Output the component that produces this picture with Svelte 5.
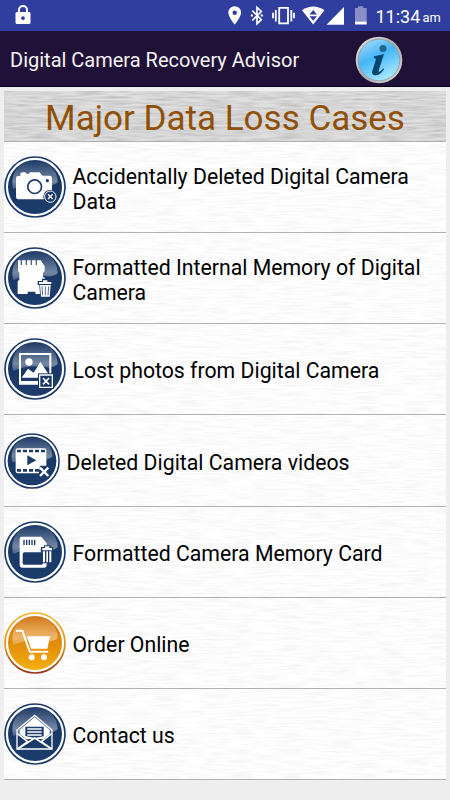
<script>
  const rows = [
    { kind: 'camera', lines: ['Accidentally Deleted Digital Camera', 'Data'], h: 91, top: 20 },
    { kind: 'memory', lines: ['Formatted Internal Memory of Digital', 'Camera'], h: 91, top: 24 },
    { kind: 'photo', lines: ['Lost photos from Digital Camera'], h: 91, top: 20 },
    { kind: 'video', lines: ['Deleted Digital Camera videos'], h: 92, top: 26 },
    { kind: 'card', lines: ['Formatted Camera Memory Card'], h: 91, top: 24 },
    { kind: 'cart', lines: ['Order Online'], h: 91, top: 24 },
    { kind: 'mail', lines: ['Contact us'], h: 91, top: 20 }
  ];
</script>

<div class="screen">
  <div class="status">
    <svg class="lock" width="16" height="20" viewBox="0 0 16 20"><path fill="#fff" fill-rule="evenodd" d="M2 7h1V5a5 5 0 0 1 10 0v2h1q1.500 0 1.500 1.500v9q0 1.500-1.500 1.500H2q-1.500 0-1.500-1.500v-9Q.5 7 2 7zm3 0h6V5a3 3 0 0 0-6 0zm3 4.200a1.900 1.900 0 1 0 0 3.800 1.900 1.900 0 0 0 0-3.800z"/></svg>
    <svg class="signals" width="150" height="31" viewBox="220 0 150 31">
      <path fill="#fff" fill-rule="evenodd" d="M234.700 6.300a6.300 6.300 0 0 0-6.400 6.300c0 4.700 6.400 12 6.400 12s6.400-7.300 6.400-12a6.300 6.300 0 0 0-6.400-6.300zm0 4.200a2.200 2.200 0 1 1 0 4.400 2.200 2.200 0 0 1 0-4.400z"/>
      <path fill="none" stroke="#fff" stroke-width="1.700" d="M252.300 10.700l9 9-4.300 4V7.500l4.300 4-9 9"/>
      <path fill="#fff" d="M250.800 14.400h2.200v2.200h-2.200zM260.700 14.400h2.200v2.200h-2.200z"/>
      <path fill="none" stroke="#fff" stroke-width="1.800" d="M279.200 7.900h8.800v15.400h-8.800zM275.800 10v11.500M291.300 10v11.500M273 12.700v5.600M294 12.700v5.600"/>
      <path fill="#fff" d="M302 10.300q11.200-7.500 22.400 0L313.200 24.400z"/>
      <path fill="#303f9f" d="M313.200 10l3.700 4.600h-7.400zM309.500 16.200h7.400l-3.700 4.600z"/>
      <path fill="#fff" d="M344 7v17.700h-17.500z"/>
      <path fill="#8990c9" d="M355 8h3V6.200h5.200V8h3.500v14H355z"/><path fill="#fff" d="M355 21.700h11.700v2.800H355z"/>
    </svg>
    <span class="clock">11:34</span><span class="am">am</span>
  </div>

  <header>
    <h1>Digital Camera Recovery Advisor</h1>
    <svg class="info" width="48" height="48" viewBox="0 0 48 48">
      <defs>
        <linearGradient id="blue" x1="0" y1="0" x2=".5" y2="1"><stop offset="0" stop-color="#b4e2fa"/><stop offset=".5" stop-color="#45b5f7"/><stop offset="1" stop-color="#a1e6ff"/></linearGradient>
        <linearGradient id="ring" x2="1" y2="1"><stop stop-color="#ededed"/><stop offset=".5" stop-color="#aaa"/><stop offset="1" stop-color="#ddd"/></linearGradient>
      </defs>
      <circle cx="24" cy="24" r="23.300" fill="url(#ring)"/><circle cx="24" cy="24" r="20.800" fill="url(#blue)" stroke="#8c969c" stroke-width=".8"/>
      <circle cx="28" cy="12.500" r="3.500" fill="#236389"/>
      <path fill="#06476f" d="M19 20.200q5.500-.8 10-2.300l-5 15.600q-.9 2.800.7 2.200 1.600-.7 3.500-3.400l1 .7q-4 6.300-8.700 6.300-4.500 0-3.100-4.800l3.300-10.300q.6-2.300-1.900-2.300z"/>
    </svg>
  </header>

  <main>
    <h2>Major Data Loss Cases</h2>
    <svg class="grain" width="442" height="689" aria-hidden="true">
      <filter id="brush" x="0" y="0" width="100%" height="100%">
        <feTurbulence type="fractalNoise" baseFrequency=".04 .5" numOctaves="2" seed="4"/>
        <feColorMatrix values="0 0 0 0 0  0 0 0 0 0  0 0 0 0 0  .4 0 0 0 -.13"/>
      </filter>
      <rect width="442" height="50" filter="url(#brush)" opacity=".65"/>
      <rect y="51" width="442" height="638" filter="url(#brush)" opacity=".22"/>
    </svg>
    {#each rows as row}
      <div class="row" style="height:{row.h}px">
        <svg class="icon" class:small={row.kind === 'video'} viewBox={row.kind === 'video' ? '0 0 168 168' : '0 0 186 186'}>
          <defs>
            <linearGradient id="navy" x2="0" y2="1"><stop stop-color="#173563"/><stop offset="1" stop-color="#1c3c6b"/></linearGradient>
            <linearGradient id="gold" x2="0" y2="1"><stop stop-color="#d27315"/><stop offset=".6" stop-color="#e59209"/><stop offset="1" stop-color="#f3af10"/></linearGradient>
            <linearGradient id="edge" x2="0" y2="1"><stop stop-color="#f2b222"/><stop offset=".6" stop-color="#db8b16"/><stop offset="1" stop-color="#993010"/></linearGradient>
            <linearGradient id="shine" x2="0" y2="1"><stop stop-color="#fff" stop-opacity=".02"/><stop offset=".75" stop-color="#fff" stop-opacity=".4"/><stop offset="1" stop-color="#fff" stop-opacity=".2"/></linearGradient>
          </defs>
          <g transform={row.kind === 'video' ? 'scale(.903)' : null}>
            <circle cx="93" cy="93" r="90" fill="#fff" stroke={row.kind === 'cart' ? 'url(#edge)' : '#1b3868'} stroke-width="5"/>
            <circle cx="93" cy="93" r="81" fill={row.kind === 'cart' ? 'url(#gold)' : 'url(#navy)'}/>
            <path fill="url(#shine)" d="M25 78a68 66 0 0 1 136 0q-12 14-40 9-50-8-93 12-3-10-3-21z"/>
          </g>
          <g transform="translate(-12 {-row.top})" fill="#fff">
            {#if row.kind === 'camera'}
              <path d="M56 80h5v-5q0-6 6-6h7q6 0 6 5h5l5-5h29l8 10h22q7 0 7 7v64H55q-7 0-7-7V87q0-7 8-7z"/>
              <circle cx="104" cy="112" r="20.500" fill="#fff" stroke="#203c69" stroke-width="5"/>
              <circle cx="142" cy="94" r="5" fill="#203c69"/>
              <circle cx="151" cy="142" r="21" fill="#1d3b69"/><circle cx="151" cy="142" r="17" fill="none" stroke="#fff" stroke-width="3"/>
              <path stroke="#fff" stroke-width="4" d="M144 135l14 14m0-14l-14 14"/>
            {:else if row.kind === 'memory'}
              <path d="M54 64h8v14h4V64h11v14h4V64h11v14h4V64h11v14h4V64h11l12 18v14l-5 5v14h5v50h-28v-7H83v7H53v-38l5-5V101l-4-4z"/>
              <path fill="#1b3a69" d="M113 126h13v-7h20v7h13v12h-4l-3 40h-31l-3-40h-5z"/>
              <path d="M117 129h12v-5h13v5h12v6h-37z"/>
              <path d="M120 138h32l-3 35h-26z"/><path stroke="#365076" stroke-width="2.500" d="M126 142l2 27m8-27v27m10-27l-2 27"/>
            {:else if row.kind === 'photo'}
              <path fill-rule="evenodd" d="M57 65h97v95H57zm6 6v78h85V71z"/><circle cx="87" cy="92" r="11"/>
              <path d="M65 139l19-27 17 12 20-32 26 38v9z"/>
              <path fill="#183661" d="M114 126h47v47h-47z"/>
              <path fill="none" stroke="#fff" stroke-width="4" d="M119 131h38v37h-38z"/><path stroke="#fff" stroke-width="5" d="M129 140l18 19m0-19l-18 19"/>
            {:else if row.kind === 'video'}
              <path d="M53 72h80q6 0 6 6v63q0 6-6 6H53q-6 0-6-6V78q0-6 6-6z"/>
              <path stroke="#1d3965" stroke-width="8" stroke-dasharray="12 6" d="M51 80h85M51 138h85"/>
              <path fill="#1b4065" d="M82 93l27 15-27 15z"/>
              <path fill="#1b3a69" d="M120 124h26v35h-32z"/><path stroke="#fff" stroke-width="7" d="M120 130l25 25m0-25l-25 25"/>
            {:else if row.kind === 'card'}
              <path fill-rule="evenodd" d="M66 71h58l16 20v66q0 7-7 7H66q-7 0-7-7V78q0-7 7-7zm7 47q-5 0-5 5v27q0 5 5 5h51q5 0 5-5v-32z"/>
              <path stroke="#1b3866" stroke-width="4" d="M72 80v16m8-16v16m8-16v16m8-16v16m8-16v16"/>
              <path fill="#1b3a69" d="M123 102h9v-5h20v5h7v14h-4v35h-30v-35h-3z"/>
              <path d="M127 105h8v-5h13v5h8v7h-29zM129 115h6v33h-6zm10 0h5v33h-5zm9 0h6v33h-6z"/>
            {:else if row.kind === 'cart'}
              <path fill="none" stroke="#fff" stroke-width="6" stroke-linecap="round" stroke-linejoin="round" d="M50 80h17l22 63h53"/>
              <path d="M81 97h69l-8 37H93z"/><circle cx="95" cy="160" r="9"/><circle cx="132" cy="160" r="9"/>
            {:else}
              <path fill="none" stroke="#fff" stroke-width="4" d="M51 101l53-44 52 44v57H51z"/>
              <path d="M59 101l45-39 45 39v12l-20 16-25-2-25 2-20-16z"/>
              <path fill="#1c3c6b" d="M76 91h55v29l-27 5-28-6z"/><path stroke="#fff" stroke-width="4" d="M82 98h43m-43 9h43m-43 9h43"/>
              <path fill="none" stroke="#fff" stroke-width="5" d="M52 112l31 24-31 22m103-46l-31 24 31 22M53 158l51-33 51 33"/>
            {/if}
          </g>
        </svg>
        <div class="label">{#each row.lines as line}<div>{line}</div>{/each}</div>
      </div>
    {/each}
  </main>
</div>

<style>
  :global(body) { margin: 0; background: #eee; }
  .screen { width: 450px; height: 800px; overflow: hidden; background: #eee; font-family: Roboto, sans-serif; }
  .status { height: 31px; display: flex; background: #303f9f; color: #fff; }
  .lock { margin: 5px 0 0 14.500px; }
  .signals { margin-left: 189.500px; }
  .clock { width: 47px; margin-left: 5.500px; font-size: 18px; line-height: 33px; white-space: nowrap; }
  .am { font-size: 12.800px; line-height: 36px; }
  header { height: 56px; display: flex; align-items: flex-start; background: #201138; box-shadow: inset 0 -1px #090316; }
  h1 { width: 345px; margin: 0 0 0 10px; font-size: 20px; font-weight: 400; line-height: 59px; white-space: nowrap; color: #f5f3f6; }
  .info { margin-top: 5px; }
  main { position: relative; margin: 4px 4px 0; background: #fff; height: 689px; }
  .grain { position: absolute; inset: 0; pointer-events: none; }
  h2 { height: 51px; box-sizing: border-box; margin: 0; border-bottom: 1px solid #b0b0b0; background: #dfdfdf; color: #965407; font-size: 35px; font-weight: 400; line-height: 55px; text-align: center; white-space: nowrap; }
  .row { display: flex; align-items: center; box-sizing: border-box; border-bottom: 1px solid #b4b4b4; }
  .icon { position: relative; flex: none; width: 62px; height: 62px; }
  .icon.small { width: 56px; height: 56px; }
  .label { position: relative; margin-left: 6.500px; padding-top: 3px; color: #000; font-size: 21.250px; line-height: 25px; white-space: nowrap; }
</style>
